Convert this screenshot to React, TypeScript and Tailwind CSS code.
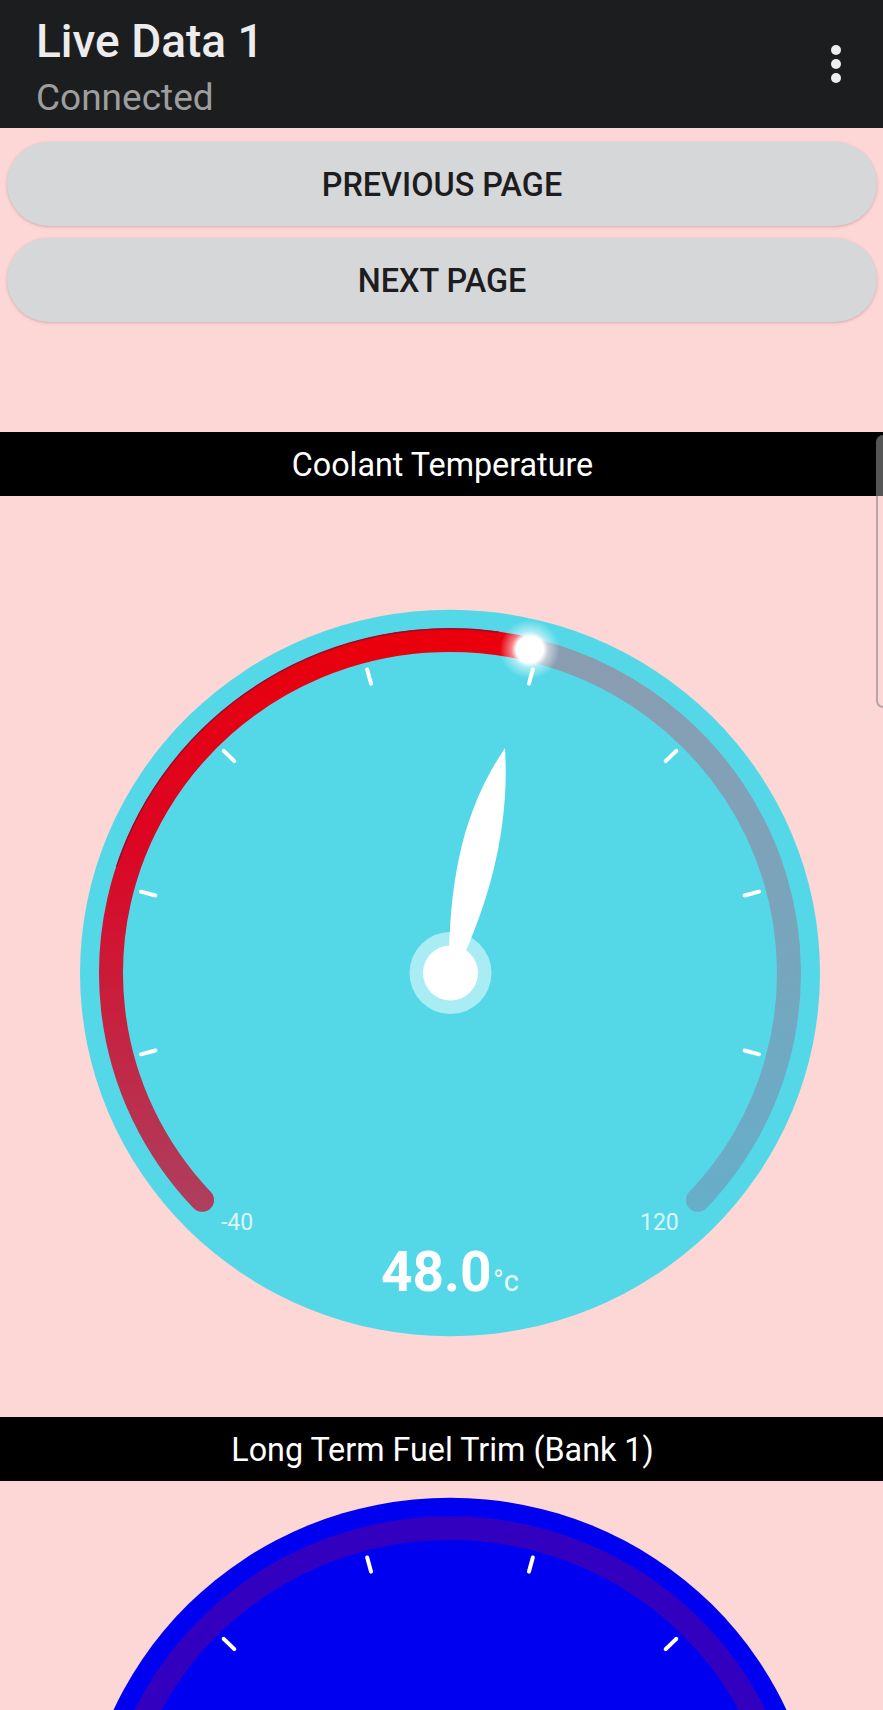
import React from "react";

const pt = (deg: number, r: number): [number, number] => {
  const a = (deg * Math.PI) / 180;
  return [r * Math.sin(a), -r * Math.cos(a)];
};

const arc = (from: number, to: number, r: number) => {
  const [x0, y0] = pt(from, r);
  const [x1, y1] = pt(to, r);
  const large = Math.abs(to - from) > 180 ? 1 : 0;
  return `M${x0.toFixed(2)} ${y0.toFixed(2)}A${r} ${r} 0 ${large} 1 ${x1.toFixed(2)} ${y1.toFixed(2)}`;
};

const TICKS = [-105, -75, -45, -15, 15, 45, 75, 105];

function Gauge({ id, dial, track, tick }: { id: string; dial: string; track?: string; tick: number }) {
  const knob = pt(13.6, 339);
  return (
    <svg width={883} height={824} viewBox="0 0 883 824" className="block">
      <defs>
        <linearGradient id={`${id}red`} gradientUnits="userSpaceOnUse" x1="0" y1="-340" x2="0" y2="240">
          <stop offset="0" stopColor="#e9000c" />
          <stop offset="0.35" stopColor="#dc0522" />
          <stop offset="1" stopColor="#ae3f5e" />
        </linearGradient>
        <linearGradient id={`${id}gray`} gradientUnits="userSpaceOnUse" x1="0" y1="-340" x2="0" y2="240">
          <stop offset="0" stopColor="#8b9cb0" />
          <stop offset="1" stopColor="#66aec9" />
        </linearGradient>
        <radialGradient id={`${id}glow`}>
          <stop offset="0.45" stopColor="#ffffff" stopOpacity="1" />
          <stop offset="0.62" stopColor="#ffffff" stopOpacity="0.5" />
          <stop offset="1" stopColor="#ffffff" stopOpacity="0" />
        </radialGradient>
      </defs>
      <g transform="translate(450 380) scale(1 0.982)">
        <circle r={370} fill={dial} />
        {track ? (
          <path d={arc(-133, 133, 339)} fill="none" stroke={track} strokeWidth={24} strokeLinecap="round" />
        ) : (
          <>
            <path d={arc(13.6, 133, 339)} fill="none" stroke={`url(#${id}gray)`} strokeWidth={24} strokeLinecap="round" />
            <path d={arc(-133, 13.6, 339)} fill="none" stroke={`url(#${id}red)`} strokeWidth={24} strokeLinecap="round" />
            <path d={arc(-72, 8, 350.5)} fill="none" stroke="#9c0a2a" strokeWidth={1.5} />
          </>
        )}
        {TICKS.map((d) => {
          const [x0, y0] = pt(d, 305);
          const [x1, y1] = pt(d, 320);
          return <line key={d} x1={x0} y1={y0} x2={x1} y2={y1} stroke="#ffffff" strokeWidth={tick} strokeLinecap="round" />;
        })}
        {!track && (
          <>
            <circle cx={knob[0]} cy={knob[1]} r={30} fill={`url(#${id}glow)`} />
            <circle cx={knob[0]} cy={knob[1]} r={14} fill="#ffffff" />
          </>
        )}
      </g>
      {!track && (
        <>
          <circle cx={450.5} cy={380} r={41} fill="#ffffff" fillOpacity={0.5} />
          <path d="M505 155C470 207 451 267 449 360L465 360C488 307 510 237 505 155Z" fill="#ffffff" />
          <circle cx={450.5} cy={380} r={27.5} fill="#ffffff" />
          <g className="font-['Roboto',sans-serif]" fill="#ffffff">
            <text x={221} y={637} fontSize={23} fillOpacity={0.8}>-40</text>
            <text x={640} y={637} fontSize={23} fillOpacity={0.8}>120</text>
            <text x={381} y={698} fontSize={55} fontWeight={700}>48.0</text>
            <text x={493} y={698} fontSize={29} fillOpacity={0.9}>°c</text>
          </g>
        </>
      )}
    </svg>
  );
}

function Bar({ children }: { children: React.ReactNode }) {
  return (
    <div className="h-[64px] bg-black flex items-center justify-center pt-[3px] pl-[2px] text-white text-[32.3px] font-['Roboto',sans-serif]">
      {children}
    </div>
  );
}

function PageButton({ children }: { children: React.ReactNode }) {
  return (
    <div className="h-[84px] rounded-[42px] bg-[#d6d7d8] shadow-[0_1px_3px_rgba(120,70,70,0.3)] flex items-center justify-center pt-[3px] text-[#1d1d1f] text-[32.4px] font-medium font-['Roboto',sans-serif]">
      {children}
    </div>
  );
}

export default function App() {
  return (
    <div className="relative w-[883px] h-[1710px] overflow-hidden bg-[#fdd6d6] font-['Roboto',sans-serif]">
      <header className="h-[128px] bg-[#1c1d1f] flex items-center justify-between pl-9 pr-[42px]">
        <div className="flex flex-col pt-[1px]">
          <div className="text-[46px] leading-[52px] font-medium text-[#ececec]">Live Data 1</div>
          <div className="text-[37px] leading-[42px] text-[#9e9e9e] mt-[10px] -mb-[4px]">Connected</div>
        </div>
        <div className="flex flex-col gap-[4px]">
          <span className="w-[10px] h-[10px] rounded-full bg-[#eeeeee]" />
          <span className="w-[10px] h-[10px] rounded-full bg-[#eeeeee]" />
          <span className="w-[10px] h-[10px] rounded-full bg-[#eeeeee]" />
        </div>
      </header>
      <div className="flex flex-col gap-3 ml-[7px] mr-[6px] mt-[14px] mb-[110px]">
        <PageButton>PREVIOUS PAGE</PageButton>
        <PageButton>NEXT PAGE</PageButton>
      </div>
      <Bar>Coolant Temperature</Bar>
      <div className="pt-[97px]">
        <Gauge id="a" dial="#54d8e8" tick={4} />
      </div>
      <Bar>Long Term Fuel Trim (Bank 1)</Bar>
      <Gauge id="b" dial="#0000f0" track="#3300c0" tick={4} />
      <div className="absolute left-[876px] top-[437px] w-[7px] h-[271px] rounded-l-[8px] border-l-2 border-b-2 border-[#b5a7a9]" />
      <div className="absolute left-[876px] top-[435px] w-[7px] h-[61px] rounded-tl-[8px] bg-[#555555]" />
    </div>
  );
}
